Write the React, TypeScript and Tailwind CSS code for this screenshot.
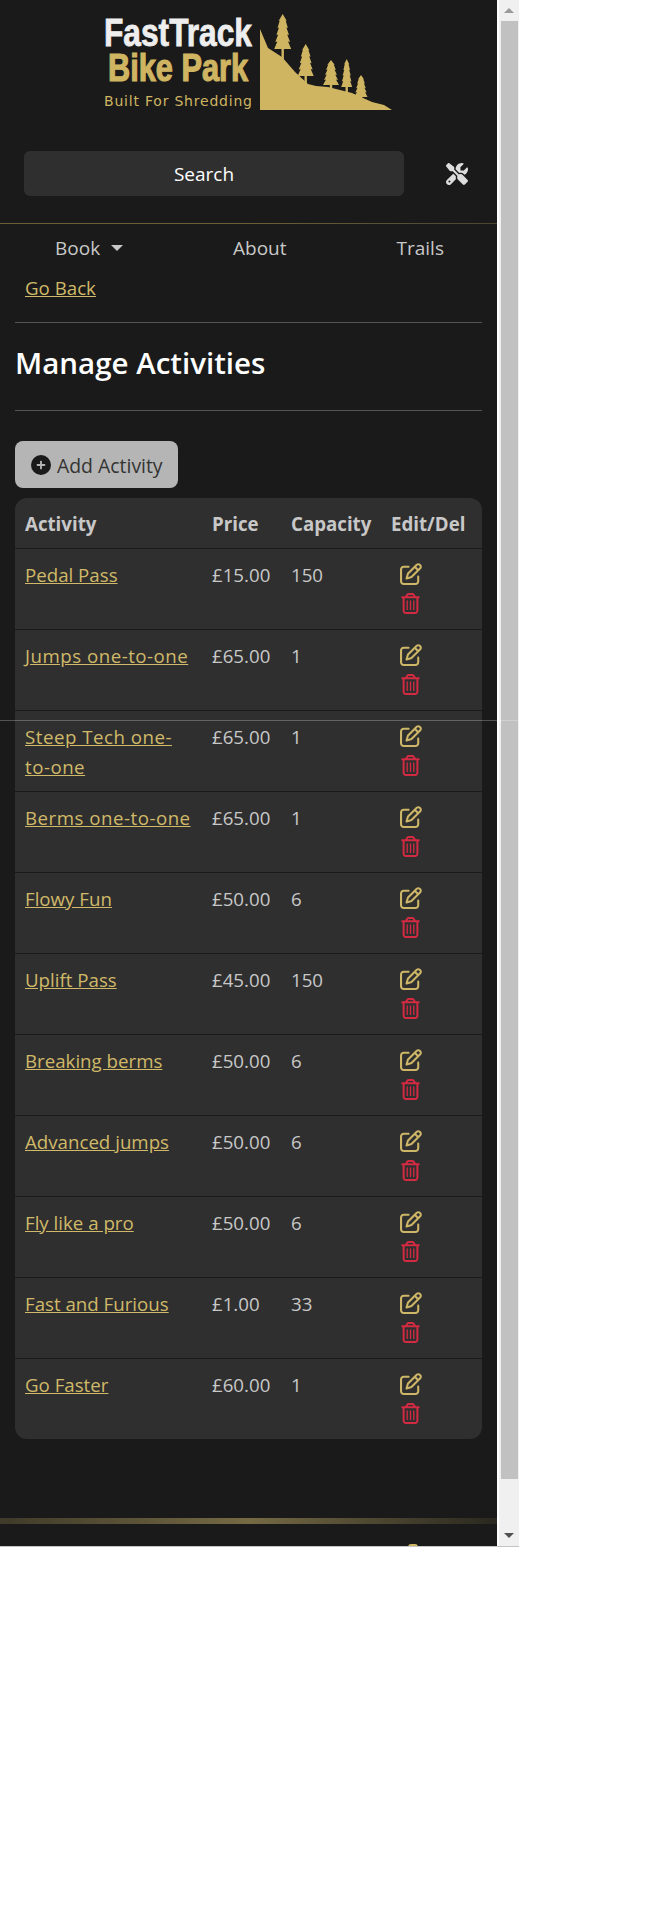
import { FaRegPenToSquare, FaRegTrashCan, FaCirclePlus, FaScrewdriverWrench } from 'react-icons/fa6';

const activities = [
  { name: 'Pedal Pass', price: '£15.00', capacity: 150 },
  { name: 'Jumps one-to-one', price: '£65.00', capacity: 1 },
  { name: 'Steep Tech one-to-one', price: '£65.00', capacity: 1 },
  { name: 'Berms one-to-one', price: '£65.00', capacity: 1 },
  { name: 'Flowy Fun', price: '£50.00', capacity: 6 },
  { name: 'Uplift Pass', price: '£45.00', capacity: 150 },
  { name: 'Breaking berms', price: '£50.00', capacity: 6 },
  { name: 'Advanced jumps', price: '£50.00', capacity: 6 },
  { name: 'Fly like a pro', price: '£50.00', capacity: 6 },
  { name: 'Fast and Furious', price: '£1.00', capacity: 33 },
  { name: 'Go Faster', price: '£60.00', capacity: 1 },
];

function Tree({ x, top, bottom, half, base }: { x: number; top: number; bottom: number; half: number; base: number }) {
  const h = bottom - top;
  const tiers = [0.2, 0.4, 0.6, 0.8, 1];
  const right: [number, number][] = [];
  tiers.forEach((t, i) => {
    const w = half * (0.35 + 0.65 * t);
    right.push([x + w, top + h * t]);
    if (i < tiers.length - 1) right.push([x + w * 0.72, top + h * t - 0.5]);
  });
  const left = right.map(([px, py]) => [2 * x - px, py] as [number, number]).reverse();
  const points = [[x, top] as [number, number], ...right, ...left].map((p) => p.join(',')).join(' ');
  return (
    <g fill="#cfb562">
      <polygon points={points} />
      <rect x={x - 1.2} y={bottom - 1} width={2.4} height={base - bottom + 1} />
    </g>
  );
}

function Logo() {
  return (
    <svg width="297" height="104" viewBox="100 10 297 104" className="block">
      <text x="104" y="46" textLength="148" lengthAdjust="spacingAndGlyphs" fontFamily="Liberation Sans" fontWeight="700" fontSize="38" stroke="#eeeeee" strokeWidth="0.8" fill="#eeeeee">FastTrack</text>
      <text x="108" y="81" textLength="140" lengthAdjust="spacingAndGlyphs" fontFamily="Liberation Sans" fontWeight="700" fontSize="38" stroke="#cfb562" strokeWidth="1.2" fill="#cfb562">Bike Park</text>
      <text x="104" y="106" textLength="148" lengthAdjust="spacing" fontFamily="DejaVu Sans" fontSize="14" fill="#cfb562">Built For Shredding</text>
      <path d="M260 29 L268 48 L282 57 L295 72 L308 84 L316 86 L328 87 L352 93 L372 102 L384 105 L392 110 L260 110 Z" fill="#cfb562" />
      <Tree x={282.7} top={14} bottom={49} half={8.5} base={62} />
      <Tree x={305.7} top={44} bottom={76} half={8} base={86} />
      <Tree x={331} top={60} bottom={85} half={8} base={90} />
      <Tree x={346.7} top={59} bottom={87} half={5.5} base={96} />
      <Tree x={361} top={75} bottom={97} half={6.5} base={105} />
    </svg>
  );
}

export default function App() {
  return (
    <div className="w-[646px] h-[1932px] bg-white font-['Open_Sans',sans-serif]">
      <div className="relative flex w-[519px] h-[1547px] overflow-hidden border-b border-[#c4c4c4]">
        <div className="w-[497px] bg-[#1a1a1a] overflow-hidden">
          <header>
            <div className="flex justify-center pt-[10px]">
              <Logo />
            </div>
            <div className="flex items-center pl-[24px] pt-[37px] pb-[27px]">
              <div className="w-[380px] h-[45px] flex items-center justify-center pr-[20px] pt-[1px] rounded-md bg-[#2f2f2f] text-white text-[19px]">Search</div>
              <FaScrewdriverWrench className="ml-[42px] text-[#dddddd]" size={22} />
            </div>
            <div className="h-px bg-gradient-to-r from-[#6b5f35] via-[#6b5f35] to-[#4a4632]"></div>
            <nav className="flex items-center h-[44px] pt-[4px] text-[19px] text-[#c8c8c8]">
              <span className="ml-[55px] w-[56px]">Book</span>
              <span className="w-0 h-0 border-x-[6px] border-x-transparent border-t-[6px] border-t-[#c8c8c8]"></span>
              <span className="ml-[110px]">About</span>
              <span className="ml-[110px]">Trails</span>
            </nav>
          </header>
          <main className="px-[15px]">
            <div className="pl-[10px] pt-[5px] h-[54px]">
              <a href="#" className="text-[18.7px] leading-[30px] text-[#d0b968] underline">Go Back</a>
            </div>
            <hr className="border-[#555555]" />
            <h1 className="h-[87px] pb-[6px] flex items-center text-[29.5px] font-semibold text-white">Manage Activities</h1>
            <hr className="border-[#555555]" />
            <button className="mt-[30px] w-[163px] h-[47px] flex items-center gap-[6px] pl-[16px] rounded-lg bg-[#b5b5b5] text-[#333333] text-[19.4px]">
              <FaCirclePlus size={20} className="text-[#1a1a1a]" />
              <span className="pt-[2px]">Add Activity</span>
            </button>
            <div className="mt-[10px] rounded-xl bg-[#2f2f2f] overflow-hidden">
              <table className="w-[467px] table-fixed text-[18.7px] leading-[30px] text-[#c8c8c8]">
                <colgroup>
                  <col className="w-[187px]" />
                  <col className="w-[79px]" />
                  <col className="w-[100px]" />
                  <col className="w-[101px]" />
                </colgroup>
                <thead>
                  <tr className="h-[50px] text-left">
                    <th className="pl-[10px] pt-[2px] font-bold">Activity</th>
                    <th className="pl-[10px] pt-[2px] font-bold">Price</th>
                    <th className="pl-[10px] pt-[2px] font-bold">Capacity</th>
                    <th className="pl-[10px] pt-[2px] font-bold whitespace-nowrap">Edit/Del</th>
                  </tr>
                </thead>
                <tbody>
                  {activities.map((a) => (
                    <tr key={a.name} className="h-[81px] border-t border-[#1a1a1a] align-top">
                      <td className="pl-[10px] pr-[10px] pt-[11px]">
                        <a href="#" className={a.name.includes('-') ? 'text-[#d0b968] underline tracking-[0.5px]' : 'text-[#d0b968] underline'}>{a.name}</a>
                      </td>
                      <td className="pl-[10px] pt-[11px]">{a.price}</td>
                      <td className="pl-[10px] pt-[11px]">{a.capacity}</td>
                      <td className="pl-[19px] pt-[14px]">
                        <FaRegPenToSquare size={22} className="text-[#cdb667]" />
                        <FaRegTrashCan size={21} className="text-[#d42a42] mt-[8px]" />
                      </td>
                    </tr>
                  ))}
                </tbody>
              </table>
            </div>
          </main>
          <footer className="mt-[79px] h-[6px] bg-gradient-to-r from-[#3f3a29] via-[#766a44] to-[#2a281f]"></footer>
        </div>
        <div className="w-[22px] flex flex-col items-center bg-[#f0f0f0] border-l-2 border-white">
          <div className="h-[21px] flex items-center justify-center">
            <span className="w-0 h-0 border-x-[5px] border-x-transparent border-b-[5px] border-b-[#9a9a9a]"></span>
          </div>
          <div className="w-[17px] h-[1458px] bg-[#c1c1c1]"></div>
          <div className="mt-auto h-[21px] flex items-center justify-center">
            <span className="w-0 h-0 border-x-[5px] border-x-transparent border-t-[5px] border-t-[#505050]"></span>
          </div>
        </div>
        {/* thin line that lies over the whole frame */}
        <div className="absolute left-0 right-0 top-[720px] h-px bg-white/25"></div>
        <div className="absolute left-[408px] top-[1544px] w-[10px] h-[3px] rounded-t bg-[#cfb562]"></div>
      </div>
    </div>
  );
}
